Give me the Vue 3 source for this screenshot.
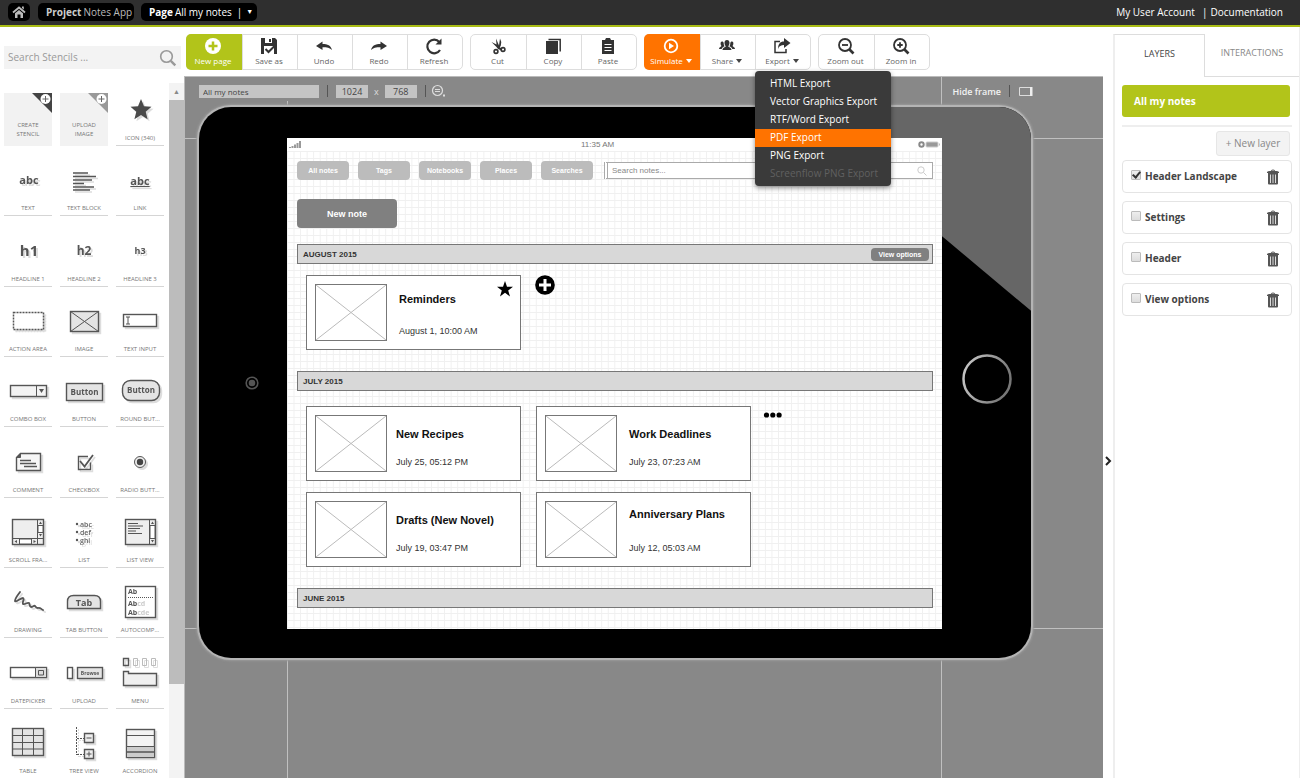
<script setup>
import { ref, reactive } from 'vue'

const G = '#555'
const label = (x, y, size, text, extra = '') =>
  `<text x="${x}" y="${y}" font-size="${size}" text-anchor="middle" font-weight="700" fill="${G}" stroke="none" ${extra}>${text}</text>`

const stencils = [
  { name: 'CREATE STENCIL', tile: 'dark' },
  { name: 'UPLOAD IMAGE', tile: 'light' },
  { name: 'ICON (340)', art: '<path fill="#4a4a4a" stroke="none" d="M25 6l3 7.200 7.500.5-5.800 5 1.900 7.600-6.600-4.200-6.600 4.200 1.900-7.600-5.800-5 7.500-.5z"/>' },
  { name: 'TEXT', art: label(25, 21, 11, 'abc') },
  { name: 'TEXT BLOCK', art: '<path stroke-width="1.500" d="M13 10h15M13 13.500h23M13 17h19M13 20.500h11M13 24h21M13 27h17"/>' },
  { name: 'LINK', art: label(24, 22, 11, 'abc', 'text-decoration="underline"') },
  { name: 'HEADLINE 1', art: label(25, 22, 15, 'h1') },
  { name: 'HEADLINE 2', art: label(24, 21, 12, 'h2') },
  { name: 'HEADLINE 3', art: label(24, 20, 9, 'h3') },
  { name: 'ACTION AREA', art: '<rect x="9.500" y="8.500" width="30" height="17" fill="#fff" stroke-width="1.500" stroke-dasharray="2 1"/>' },
  { name: 'IMAGE', art: '<rect x="10.500" y="7.500" width="28" height="20" fill="#e4e4e4" stroke-width="1.400"/><path d="M10.500 7.500l28 20m0-20l-28 20"/>' },
  { name: 'TEXT INPUT', art: '<rect x="7.500" y="10.500" width="33" height="12" fill="#fff" stroke-width="1.400"/><path d="M10 13h4m-4 7h4m-2-7v7"/>' },
  { name: 'COMBO BOX', art: '<rect x="6.500" y="11.500" width="36" height="11" fill="#f3f3f3" stroke-width="1.400"/><path d="M32.500 11.500v11"/><path fill="#555" stroke="none" d="M35 15h5l-2.500 4z"/>' },
  { name: 'BUTTON', art: '<rect x="6.500" y="9.500" width="36" height="17" fill="#e4e4e4" stroke-width="1.400"/>' + label(24.5, 21, 8, 'Button') },
  { name: 'ROUND BUT...', art: '<rect x="6.500" y="6.500" width="37" height="20" rx="8" fill="#e4e4e4" stroke-width="1.400"/>' + label(25, 19, 8, 'Button') },
  { name: 'COMMENT', art: '<path fill="#f6f6f6" stroke-width="1.400" d="M16.500 8.500h20v17h-24v-13z"/><path d="M16.500 8.500v4h-4" fill="#555"/><path stroke-width="1.400" d="M16 15.500h11M16 18.500h16M20 21.500h13"/>' },
  { name: 'CHECKBOX', art: '<path stroke-width="1.400" d="M28 11.500h-9.500v13h12v-7"/><path stroke-width="1.800" d="M20 16l4.500 5.500L33 10"/>' },
  { name: 'RADIO BUTT...', art: '<circle cx="24" cy="17" r="5.500" fill="#eee"/><circle cx="24" cy="17" r="3.200" fill="#444" stroke="none"/>' },
  { name: 'SCROLL FRA...', art: '<rect x="8.500" y="4.500" width="31" height="25" fill="#eee" stroke-width="1.400"/><path d="M33.500 4.500v25M8.500 23.500h31"/><path fill="#fff" d="M34 10.500h5v7h-5zM15.500 24h12v5h-12z"/><path fill="#555" stroke="none" d="M35 9l1.500-2.500L38 9zM35 19h3l-1.500 2.500zM13 25v3l-2.500-1.500zM29.500 25v3l2.500-1.500z"/>' },
  { name: 'LIST', art: ['abc', 'def', 'ghi'].map((t, i) => `<text x="20" y="${12 + i * 8}" font-size="7" font-weight="600" fill="#666" stroke="none">${t}</text><circle cx="17" cy="${9 + i * 8}" r="1.200" fill="#555" stroke="none"/>`).join('') },
  { name: 'LIST VIEW', art: '<rect x="9.500" y="4.500" width="30" height="25" fill="#eee" stroke-width="1.400"/><path d="M33.500 4.500v25M12 8.500h10M12 11h15M12 13.500h12M12 16h8M12 18.500h14"/><path fill="#fff" d="M34 10.500h5v13h-5z"/><path fill="#555" stroke="none" d="M35 9l1.500-2.500L38 9zM35 25h3l-1.500 2.500z"/>' },
  { name: 'DRAWING', art: '<path stroke-width="1.800" stroke-linecap="round" stroke-linejoin="round" d="M16 7c-2 3-5 6-5 9 0 2 6-3 8-3 2 1-1 4 0 6 2 1 4-2 6-1 1 1 0 3 2 4 2 0 3-2 4-1s1 2 3 2c2-1 3 1 5 2"/>' },
  { name: 'TAB BUTTON', art: '<path fill="#e4e4e4" stroke-width="1.400" d="M7.500 23.500v-7q0-6 6-6h21q6 0 6 6v7z"/>' + label(24, 21, 9, 'Tab') },
  { name: 'AUTOCOMP...', art: '<rect x="9.500" y="1.500" width="30" height="31" fill="#fff" stroke-width="1.400"/><path stroke-dasharray="1 1" d="M12 12.500h25"/><g stroke="none" font-size="7" font-weight="700" fill="#555"><text x="12" y="9">Ab</text><text x="12" y="21">Ab<tspan fill="#ccc">cd</tspan></text><text x="12" y="30">Ab<tspan fill="#ccc">cde</tspan></text></g>' },
  { name: 'DATEPICKER', art: '<rect x="6.500" y="11.500" width="36" height="10" fill="#fff" stroke-width="1.400"/><path fill="#ddd" d="M31.500 11.500h11v10h-11z"/><path d="M34.500 14.500h5v4.500h-5z"/>' },
  { name: 'UPLOAD', art: '<rect x="7.500" y="11.500" width="5" height="11" fill="#fff" stroke-width="1.400"/><rect x="17.500" y="11.500" width="25" height="11" fill="#e4e4e4" stroke-width="1.400"/>' + label(30, 19, 5, 'Browse') },
  { name: 'MENU', art: '<path stroke-width="1.400" d="M7.500 2.500h5v7h-5z"/><path stroke="#bbb" d="M17.500 2.500h4v7h-4zM26.500 2.500h4v7h-4zM35.500 2.500h4v7h-4z"/><path fill="#f0f0f0" stroke-width="1.400" d="M7.500 15.500h5v2h28v12h-33z"/>' },
  { name: 'TABLE', art: '<rect x="8.500" y="2.500" width="31" height="27" fill="#e4e4e4" stroke-width="1.400"/><path d="M8.500 9.500h31M8.500 16.500h31M8.500 23h31M18.500 2.500v27M29.500 2.500v27"/>' },
  { name: 'TREE VIEW', art: '<path stroke-dasharray="2 1" d="M16.500 1v28M17 12.500h7M17 28.500h7"/><path fill="#eee" stroke-width="1.400" d="M24.500 7.500h9v9h-9zM24.500 23.500h9v9h-9z"/><path d="M26.500 12h5M26.500 28h5m-2.500-2.500v5"/>' },
  { name: 'ACCORDION', art: '<rect x="10.500" y="3.500" width="28" height="28" fill="#f3f3f3" stroke-width="1.400"/><path fill="#ccc" d="M10.500 20.500h28v5.500h-28zM10.500 26h28v5.500h-28z"/><path d="M10.500 9.500h28"/>' },
]

const dark = 'fill="#333" stroke="none"'
const glyphs = {
  newpage: '<circle cx="10" cy="9" r="8" fill="#fff" stroke="none"/><path stroke="#b2c41a" stroke-width="2.500" d="M10 4.500v9M5.500 9h9"/>',
  save: `<path ${dark} d="M2 1h14l2 2v14H2z"/><path fill="#fff" stroke="none" d="M6 1h7v5H6zM5 9h10v8H5z"/><path ${dark} d="M10 2h2v3h-2z"/><path stroke-width="2" d="M6.500 12l3 3 7-7"/>`,
  undo: `<path ${dark} d="M2 9l6.500-4.500V7c5 0 8.500 1.500 9.500 6-2-2.300-5-2.800-9.500-2.800V13z"/>`,
  redo: `<path ${dark} d="M18 9l-6.500-4.500V7C6.500 7 3 8.500 2 13c2-2.300 5-2.800 9.500-2.800V13z"/>`,
  refresh: `<path stroke-width="2.200" d="M15.300 5A6.800 6.800 0 1 0 16 13"/><path ${dark} d="M17.500 1.500v6h-6z"/>`,
  cut: `<path ${dark} d="M8 1.500l3 7 1-7q2 3 .8 7l-1 2 2.700 1-1 2-3.500-1.500L8.500 10 3.500 5l5 2.500z"/><circle cx="8" cy="14.500" r="1.900" stroke-width="1.600"/><circle cx="15" cy="12.500" r="1.900" stroke-width="1.600"/>`,
  copy: `<path ${dark} d="M3 4h12v13H3z"/><path stroke-width="1.500" d="M5.500 2.500h11.700v12"/>`,
  paste: `<path ${dark} d="M4 3h3l1-2h4l1 2h3v14H4z"/><path stroke="#fff" d="M6.500 7.500h7M6.500 10.500h7M6.500 13.500h7"/>`,
  simulate: '<circle cx="10" cy="9" r="6.300" stroke="#fff" stroke-width="1.800"/><path fill="#fff" stroke="none" d="M8 5.800l5 3.200-5 3.200z"/>',
  share: `<path ${dark} d="M10 3c1.700 0 2.500 1.200 2.500 2.800S11.700 9 11.200 9.300c.3 1 3.300 1.400 3.300 3.700h-9c0-2.300 3-2.700 3.300-3.700C8.300 9 7.500 7.500 7.500 5.800S8.300 3 10 3zM5 4.500c1 0 1.600.6 1.700 1.500 0 1.500.2 2.400.9 3.300-1.500.8-2.600 1.400-2.900 2.700H2c0-2 2-2 2.500-3C3.500 8 3 4.500 5 4.500zM15 4.500c-1 0-1.600.6-1.700 1.500 0 1.500-.2 2.400-.9 3.300 1.500.8 2.600 1.400 2.900 2.700H18c0-2-2-2-2.500-3C16.500 8 17 4.500 15 4.500z"/>`,
  export: `<path stroke-width="1.500" d="M8 4.500H3v11h11V12"/><path ${dark} d="M12 1l6.500 5L12 11V8c-3 0-5 1-6 4 0-5 2-7.500 6-7.500z"/>`,
  zoomout: '<circle cx="9" cy="8" r="6" stroke-width="1.800"/><path stroke-width="2.600" d="M13.500 12.500l4 4"/><path stroke-width="1.800" d="M6 8h6"/>',
  zoomin: '<circle cx="9" cy="8" r="6" stroke-width="1.800"/><path stroke-width="2.600" d="M13.500 12.500l4 4"/><path stroke-width="1.800" d="M6.300 8h5.400M9 5.300v5.400"/>',
}

const groups = [
  [['newpage', 'New page'], ['save', 'Save as'], ['undo', 'Undo'], ['redo', 'Redo'], ['refresh', 'Refresh']],
  [['cut', 'Cut'], ['copy', 'Copy'], ['paste', 'Paste']],
  [['simulate', 'Simulate', true], ['share', 'Share', true], ['export', 'Export', true]],
  [['zoomout', 'Zoom out'], ['zoomin', 'Zoom in']],
]

const exportItems = ['HTML Export', 'Vector Graphics Export', 'RTF/Word Export', 'PDF Export', 'PNG Export', 'Screenflow PNG Export']
const activeExport = ref('PDF Export')
const menuOpen = ref(true)

const search = ref('')
const noteSearch = ref('')
const page = reactive({ name: 'All my notes', width: '1024', height: '768' })
const noteTabs = ['All notes', 'Tags', 'Notebooks', 'Places', 'Searches']

const months = [
  { name: 'AUGUST 2015', options: true, action: 'add', notes: [{ title: 'Reminders', date: 'August 1, 10:00 AM', kind: 'starred' }] },
  {
    name: 'JULY 2015', action: 'more', notes: [
      { title: 'New Recipes', date: 'July 25, 05:12 PM', kind: 'tight' },
      { title: 'Work Deadlines', date: 'July 23, 07:23 AM', kind: '' },
      { title: 'Drafts (New Novel)', date: 'July 19, 03:47 PM', kind: 'tight' },
      { title: 'Anniversary Plans', date: 'July 12, 05:03 AM', kind: 'spread' },
    ],
  },
  { name: 'JUNE 2015', notes: [] },
]

const layers = reactive([
  { name: 'Header Landscape', on: true },
  { name: 'Settings', on: false },
  { name: 'Header', on: false },
  { name: 'View options', on: false },
])
</script>

<template>
  <div class="app">
    <header class="topbar">
      <a class="pill home" href="#" aria-label="Home">
        <svg width="14" height="14" viewBox="0 0 14 14"><path fill="none" stroke="#bbb" stroke-width="1.800" d="M1 7.500l6-5 6 5" /><path fill="#bbb" d="M3 8.200l4-3.300 4 3.300V13H8.500V9.500h-3V13H3zM10 1.500h1.800v3L10 3z" /></svg>
      </a>
      <a class="pill project" href="#"><b>Project</b> Notes App</a>
      <button class="pill page" type="button"><b>Page</b> All my notes<span class="bar">|</span><span class="tri">▼</span></button>
      <nav class="account"><a href="#">My User Account</a><span>|</span><a href="#">Documentation</a></nav>
    </header>

    <div class="body">
      <aside class="sidebar">
        <div class="stencil-search">
          <input v-model="search" type="text" placeholder="Search Stencils ..." aria-label="Search stencils" />
          <svg width="18" height="18" viewBox="0 0 18 18" fill="none" stroke="#999"><circle cx="7.500" cy="7.500" r="5.800" stroke-width="1.600" /><path stroke-width="2.400" d="M11.800 11.800l4.500 4.500" /></svg>
        </div>
        <div class="stencils">
          <div class="stencil-grid">
            <button v-for="s in stencils" :key="s.name" type="button" class="stencil" :class="{ tile: s.tile }">
              <svg v-if="s.tile" class="corner" width="20" height="20" viewBox="0 0 20 20">
                <path :fill="s.tile === 'dark' ? '#444' : '#999'" d="M0 0h20v20z" /><circle cx="13.500" cy="6" r="5" fill="#fff" /><path stroke="#666" d="M13.500 3v6M10.500 6h6" />
              </svg>
              <svg v-else class="art" width="48" height="34" viewBox="0 0 48 34" v-html="s.art"></svg>
              <span>{{ s.name }}</span>
            </button>
          </div>
          <div class="scrollbar"><span class="arrow">▲</span><span class="thumb"></span></div>
        </div>
      </aside>

      <main class="work">
        <div class="toolbar">
          <div v-for="(g, gi) in groups" :key="gi" class="group">
            <div v-for="[id, text, drop] in g" :key="id" class="slot">
              <button type="button" class="tool" :class="id" @click="id === 'export' && (menuOpen = !menuOpen)">
                <svg width="20" height="18" viewBox="0 0 20 18" v-html="glyphs[id]"></svg>
                <span>{{ text }}<i v-if="drop"></i></span>
              </button>
              <div v-if="id === 'export' && menuOpen" class="menu">
                <button v-for="e in exportItems" :key="e" type="button" :class="{ active: e === activeExport }" :disabled="e.startsWith('Screenflow')" @mouseenter="activeExport = e">{{ e }}</button>
              </div>
            </div>
          </div>
        </div>

        <section class="canvas">
          <div class="canvas-bar">
            <div class="left">
              <input v-model="page.name" class="name" type="text" aria-label="Page name" />
              <span class="sep"></span>
              <input v-model="page.width" class="dim" type="text" aria-label="Width" />
              <span class="times">x</span>
              <input v-model="page.height" class="dim" type="text" aria-label="Height" />
              <span class="sep"></span>
              <button type="button" class="plain" aria-label="Zoom level"><svg width="16" height="14" viewBox="0 0 16 14" fill="none" stroke="#ddd"><circle cx="6.500" cy="6.500" r="5" stroke-width="1.200" /><path d="M4 5.500h5M4 7.500h5" /><path fill="#ddd" stroke="none" d="M12 10.500h2v2h-2z" /></svg></button>
            </div>
            <div class="right">
              <button type="button" class="plain">Hide frame</button>
              <span class="sep"></span>
              <button type="button" class="plain" aria-label="Orientation"><svg width="15" height="11" viewBox="0 0 15 11"><path fill="none" stroke="#ddd" d="M1.500 1.500h11v8h-11z" /><path fill="#eee" d="M12 1h2.500v9H12z" /></svg></button>
            </div>
          </div>

          <div class="device">
            <svg class="camera" width="14" height="14" viewBox="0 0 14 14"><circle cx="7" cy="7" r="5.800" fill="none" stroke="#555" stroke-width="1.600" /><circle cx="7" cy="7" r="3.300" fill="#555" /></svg>
            <div class="screen">
              <div class="status">
                <svg width="12" height="7" viewBox="0 0 12 7" fill="#999"><path d="M0 6h2v1H0zM2.500 5h2v2h-2zM5 3.500h2V7H5zM7.500 2h2v5h-2zM10 0h2v7h-2z" /></svg>
                <span>11:35 AM</span>
                <svg class="batt" width="22" height="7" viewBox="0 0 22 7"><circle cx="3.500" cy="3.500" r="2.200" fill="none" stroke="#888" stroke-width="2" /><rect x="8" y="1" width="12" height="5" rx="1" fill="#999" stroke="#ccc" /><path fill="#bbb" d="M21 2.500h1v2h-1z" /></svg>
              </div>
              <div class="content">
                <div class="note-nav">
                  <button v-for="t in noteTabs" :key="t" type="button">{{ t }}</button>
                  <div class="note-search">
                    <input v-model="noteSearch" type="text" placeholder="Search notes..." aria-label="Search notes" />
                    <svg width="10" height="10" viewBox="0 0 10 10" fill="none" stroke="#ccc"><circle cx="4" cy="4" r="3.200" /><path d="M6.500 6.500L9.500 9.500" /></svg>
                  </div>
                </div>
                <button type="button" class="new-note">New note</button>
                <section v-for="m in months" :key="m.name" class="month">
                  <h2>{{ m.name }}<button v-if="m.options" type="button">View options</button></h2>
                  <div v-if="m.notes.length" class="notes" :class="m.action">
                    <div class="cards">
                      <article v-for="n in m.notes" :key="n.title" class="note" :class="n.kind">
                        <svg width="72" height="57" viewBox="0 0 72 57" fill="#fff"><rect x="0.500" y="0.500" width="71" height="56" stroke="#777" /><path stroke="#bbb" d="M1 1l70 55M71 1L1 56" /></svg>
                        <div><h3>{{ n.title }}</h3><p>{{ n.date }}</p></div>
                        <svg v-if="n.kind === 'starred'" class="star" width="16" height="16" viewBox="0 0 16 16"><path d="M8 0l2 5.700h6l-4.800 3.700 1.800 6L8 11.800 3 15.400l1.800-6L0 5.700h6z" /></svg>
                      </article>
                    </div>
                    <button v-if="m.action === 'add'" type="button" class="plain" aria-label="Add note"><svg width="20" height="20" viewBox="0 0 20 20"><circle cx="10" cy="10" r="9.800" /><path stroke="#fff" stroke-width="3" d="M10 4v12M4 10h12" /></svg></button>
                    <button v-else type="button" class="plain" aria-label="More notes"><svg width="20" height="6" viewBox="0 0 20 6"><circle cx="3.500" cy="3" r="2.600" /><circle cx="9.800" cy="3" r="2.600" /><circle cx="16.100" cy="3" r="2.600" /></svg></button>
                  </div>
                </section>
              </div>
            </div>
            <svg class="home-key" width="50" height="50" viewBox="0 0 50 50">
              <defs><linearGradient id="ring" x1="0" y1="0" x2="1" y2="0.300"><stop offset="0" stop-color="#ccc" /><stop offset="1" stop-color="#777" /></linearGradient></defs>
              <circle cx="25" cy="25" r="23.500" fill="#000" stroke="url(#ring)" stroke-width="2.500" />
            </svg>
          </div>
        </section>
      </main>

      <button type="button" class="collapse" aria-label="Collapse panel"><svg width="8" height="10" viewBox="0 0 8 10"><path fill="none" stroke="#222" stroke-width="2" d="M2 1l4 4-4 4" /></svg></button>

      <aside class="panel">
        <div class="tabs" role="tablist">
          <button type="button" role="tab" aria-selected="true" class="on">LAYERS</button>
          <button type="button" role="tab" aria-selected="false">INTERACTIONS</button>
        </div>
        <div class="layers">
          <button type="button" class="base">All my notes</button>
          <hr />
          <button type="button" class="new-layer">+ New layer</button>
          <div v-for="l in layers" :key="l.name" class="layer">
            <label><input v-model="l.on" type="checkbox" /><span>{{ l.name }}</span></label>
            <button type="button" class="plain" :aria-label="'Delete ' + l.name"><svg width="12" height="16" viewBox="0 0 12 16"><path fill="none" stroke="#555" d="M4 2.500Q4 1 6 1t2 1.500" /><path fill="#555" d="M0 3q1-1 2.500-1h7Q11 2 12 3v1H0zM1 4h10v10.500q0 1-1 1H2q-1 0-1-1z" /><path stroke="#ddd" d="M3.500 5.500v8.500M6 5.500v8.500M8.500 5.500v8.500" /></svg></button>
          </div>
        </div>
      </aside>
    </div>
  </div>
</template>

<style>
html, body { margin: 0; background: #fff; }
</style>

<style scoped>
* { box-sizing: border-box; }
.app { display: flex; flex-direction: column; height: 100vh; overflow: hidden; font-family: "Open Sans", "Noto Sans", sans-serif; font-size: 10px; color: #444; }
button, input { font: inherit; color: inherit; margin: 0; padding: 0; border: 0; background: none; border-radius: 0; outline: none; }
button { cursor: pointer; white-space: nowrap; }
a { color: inherit; text-decoration: none; }
svg { display: block; flex: none; }
.plain { display: flex; align-items: center; }

.topbar { display: flex; align-items: center; gap: 8px; height: 27px; flex: none; padding: 0 17px 1px 8px; background: #2f2f2f; border-bottom: 2px solid #a9bc14; color: #fff; }
.pill { display: flex; align-items: center; gap: 2px; height: 18px; padding: 0 8px; border-radius: 5px; background: #000; line-height: 18px; }
.home { width: 22px; padding: 0 4px; }
.project { width: 96px; color: #bbb; white-space: nowrap; }
.project b { color: #ccc; }
.page { width: 116px; margin-left: -1px; }
.bar { margin-left: 3px; }
.tri { font-size: 7px; margin-left: 2px; }
.account { display: flex; gap: 3px; margin-left: auto; }
.account span { margin-left: 4px; }

.body { display: flex; flex: 1; min-height: 0; }
.sidebar { display: flex; flex-direction: column; width: 184px; flex: none; padding-top: 19px; }
.stencil-search { display: flex; align-items: center; height: 23px; margin: 0 3px 14px 4px; padding: 0 4px; background: #f3f3f3; }
.stencil-search input { flex: 1; min-width: 0; padding-bottom: 2px; }
.stencil-search input::placeholder { color: #999; opacity: 1; }
.stencils { display: flex; flex: 1; min-height: 0; overflow: hidden; }
.stencil-grid { display: grid; flex: 1; grid-template-columns: repeat(3, 48px); column-gap: 8px; grid-auto-rows: 53px; align-content: space-between; margin: 10px 0 -1px 4px; }
.stencil { position: relative; display: flex; flex-direction: column; align-items: center; justify-content: space-between; border-bottom: 1px solid #d5d5d5; font-size: 6px; line-height: 14px; color: #777; }
.stencil.tile { background: #f2f2f2; border-color: #f2f2f2; justify-content: flex-end; padding: 0 8px 6px; line-height: 9px; white-space: normal; }
.corner { position: absolute; top: 0; right: 0; }
.art { fill: none; stroke: #555; filter: drop-shadow(2px 2px 0 #ddd); }
.scrollbar { display: flex; flex-direction: column; width: 15px; background: #f3f3f3; }
.arrow { height: 17px; line-height: 17px; text-align: center; font-size: 7px; color: #888; }
.thumb { flex: 0 0 84%; background: #bcbcbc; }

.work { display: flex; flex-direction: column; flex: 1; min-width: 0; padding-top: 7px; }
.toolbar { display: flex; gap: 7px; height: 36px; margin: 0 0 6px 2px; }
.group { display: flex; border: 1px solid #ddd; border-radius: 5px; }
.slot { position: relative; width: 55px; border-left: 1px solid #ddd; }
.slot:first-child { border-left: 0; }
.tool { display: flex; flex-direction: column; align-items: center; justify-content: center; gap: 1px; width: 100%; height: 100%; padding: 0 2px 2px 0; font-size: 8px; line-height: 10px; color: #666; }
.tool svg { fill: none; stroke: #333; }
.tool i { display: inline-block; margin-left: 3px; border: 3px solid transparent; border-top: 4px solid #444; border-bottom: 0; vertical-align: 1px; }
.newpage, .simulate { width: 56px; height: 36px; margin: -1px; border-radius: 5px 0 0 5px; background: #b2c41a; color: #fff; }
.simulate { background: #ff7300; }
.simulate i { border-top-color: #fff; }
.menu { position: absolute; z-index: 5; top: 36px; left: -1px; display: flex; flex-direction: column; width: 136px; padding: 4px 0 3px; border-radius: 4px; background: #3a3a3a; box-shadow: 0 2px 5px rgba(0, 0, 0, .45); }
.menu button { height: 18px; padding: 0 0 1px 15px; text-align: left; line-height: 17px; color: #fff; }
.menu .active { background: #ff7300; }
.menu :disabled { color: #606060; }

.canvas { flex: 1; min-height: 0; isolation: isolate; overflow: hidden; border: 1px solid #bbb; border-width: 1px 0 0 1px; background: #888; }
.canvas-bar { display: flex; justify-content: space-between; height: 30px; font-size: 9px; }
.left, .right { display: flex; align-items: center; gap: 8px; height: 24px; padding-top: 4px; }
.left { padding-left: 14px; padding-right: 8px; background: #888; }
.name { width: 120px; height: 13px; padding-left: 4px; background: #c4c4c4; font-size: 8px; }
.dim { width: 32px; height: 13px; background: #c4c4c4; text-align: center; }
.times { color: #ddd; margin: 0 -2px; }
.sep { width: 1px; height: 12px; background: #555; }
.left .plain { margin-left: -3px; }
.right { padding-right: 70px; color: #f2f2f2; font-weight: 600; }

.device { position: relative; display: flex; align-items: center; margin: 0 72px 0 14px; padding: 31px 0 29px; border-radius: 32px; background: #000; box-shadow: 0 0 0 2px #b4b4b4, 0 0 2px 3px #999; }
.device::before { content: ""; position: absolute; inset: 0; border-radius: inherit; background: #666; clip-path: polygon(70.8% 0, 100% 0, 100% 37%); }
.camera { margin: 0 28px 2px 46px; }
.screen { position: relative; flex: 1; min-width: 0; display: flex; flex-direction: column; background: #fff; font-family: "Liberation Sans", Arial, sans-serif; }
.screen::before, .screen::after { content: ""; position: absolute; z-index: -1; border: 1px solid #c0c0c0; }
.screen::before { inset: -500px 0; border-width: 0 1px; }
.screen::after { inset: 0 -500px; border-width: 1px 0; }
.home-key { position: relative; margin: 0 19px 10px 20px; }
.status { display: grid; grid-template-columns: 292px auto 1fr; align-items: center; height: 13px; padding: 0 2px; font-size: 8px; color: #777; }
.batt { justify-self: end; }
.content { padding: 10px 9px 21px 10px; background-image: linear-gradient(to right, #f0f0f0 1px, transparent 1px), linear-gradient(to bottom, #f0f0f0 1px, transparent 1px); background-size: 1% 100%, 100% 7px; }
.note-nav { display: flex; align-items: center; gap: 9px; height: 19px; }
.note-nav > button { width: 52px; height: 19px; border-radius: 4px; background: #bcbcbc; color: #fff; font-size: 7px; font-weight: 700; }
.note-search { display: flex; align-items: center; flex: 1; height: 17px; margin-left: 2px; padding-right: 5px; border: 1px solid #aaa; border-left: 4px double #aaa; background: #fff; }
.note-search input { flex: 1; min-width: 0; padding-left: 4px; font-size: 8px; }
.note-search input::placeholder { color: #888; opacity: 1; }
.new-note { display: block; width: 100px; height: 29px; margin: 19px 0 16px; border-radius: 4px; background: #808080; color: #fff; font-size: 9px; font-weight: 700; }
.month h2 { display: flex; align-items: center; justify-content: space-between; height: 20px; margin: 0; padding: 0 3px 0 5px; border: 1px solid #777; background: #d8d8d8; font-size: 8px; color: #333; }
.month h2 button { width: 58px; height: 13px; border-radius: 4px; background: #808080; color: #fff; font-size: 7px; font-weight: 700; line-height: 13px; }
.notes { display: flex; align-items: flex-start; padding: 15px 9px 21px; }
.notes.add { padding-top: 11px; }
.cards { display: grid; grid-template-columns: repeat(2, 215px); gap: 11px 15px; }
.notes.add .cards { grid-template-columns: 215px; }
.notes .plain { margin: 0 0 0 14px; }
.notes.more .plain { margin: 6px 0 0 12px; }
.note { position: relative; display: flex; height: 75px; padding: 8px; gap: 12px; border: 1px solid #777; background: #fff; }
.note div { padding-top: 12px; }
.note h3 { margin: 0 0 14px; font-size: 11px; line-height: 14px; color: #111; }
.note p { margin: 0; font-size: 9px; line-height: 14px; color: #333; }
.tight { gap: 9px; }
.starred div { padding-top: 8px; }
.starred h3 { margin-bottom: 18px; }
.spread div { padding-top: 6px; }
.spread h3 { margin-bottom: 20px; }
.star { position: absolute; top: 5px; right: 7px; }

.collapse { width: 10px; flex: none; display: flex; align-items: center; justify-content: center; padding-top: 117px; }
.panel { width: 187px; flex: none; padding-top: 7px; border-right: 1px solid #eee; }
.tabs { display: flex; height: 43px; font-size: 9px; }
.tabs button { flex: 1; padding-bottom: 5px; border-bottom: 1px solid #ddd; color: #888; }
.tabs .on { flex: 0 0 92px; border: 1px solid #ddd; border-width: 1px 1px 0 2px; border-left-color: #eee; color: #444; }
.layers { display: flex; flex-direction: column; min-height: 701px; padding: 8px 7px 0; border-left: 2px solid #eee; }
.base { height: 32px; margin: 0 2px 0 0; padding-left: 12px; border-radius: 3px; background: #b2c41a; color: #fff; text-align: left; font-weight: 700; }
hr { width: 100%; height: 2px; margin: 8px 0 4px; border: 0; background: #eee; }
.new-layer { align-self: flex-end; width: 74px; height: 25px; margin: 0 2px 4px 0; padding-bottom: 2px; border: 1px solid #e6e6e6; border-radius: 3px; background: #f3f3f3; color: #888; }
.layer { display: flex; align-items: center; justify-content: space-between; height: 33px; margin-bottom: 8px; padding: 0 12px 0 8px; border: 1px solid #e4e4e4; border-radius: 4px; font-weight: 700; }
.layer label { display: flex; align-items: center; gap: 4px; padding-bottom: 1px; }
.layer label input { appearance: none; width: 10px; height: 10px; margin-bottom: 2px; border: 1px solid #bbb; border-radius: 1px; background: linear-gradient(#eee, #ddd); }
.layer label input:checked::after { content: ""; display: block; width: 3px; height: 6px; margin: -1px 0 0 2px; border: solid #333; border-width: 0 2px 2px 0; transform: rotate(40deg); }
</style>
